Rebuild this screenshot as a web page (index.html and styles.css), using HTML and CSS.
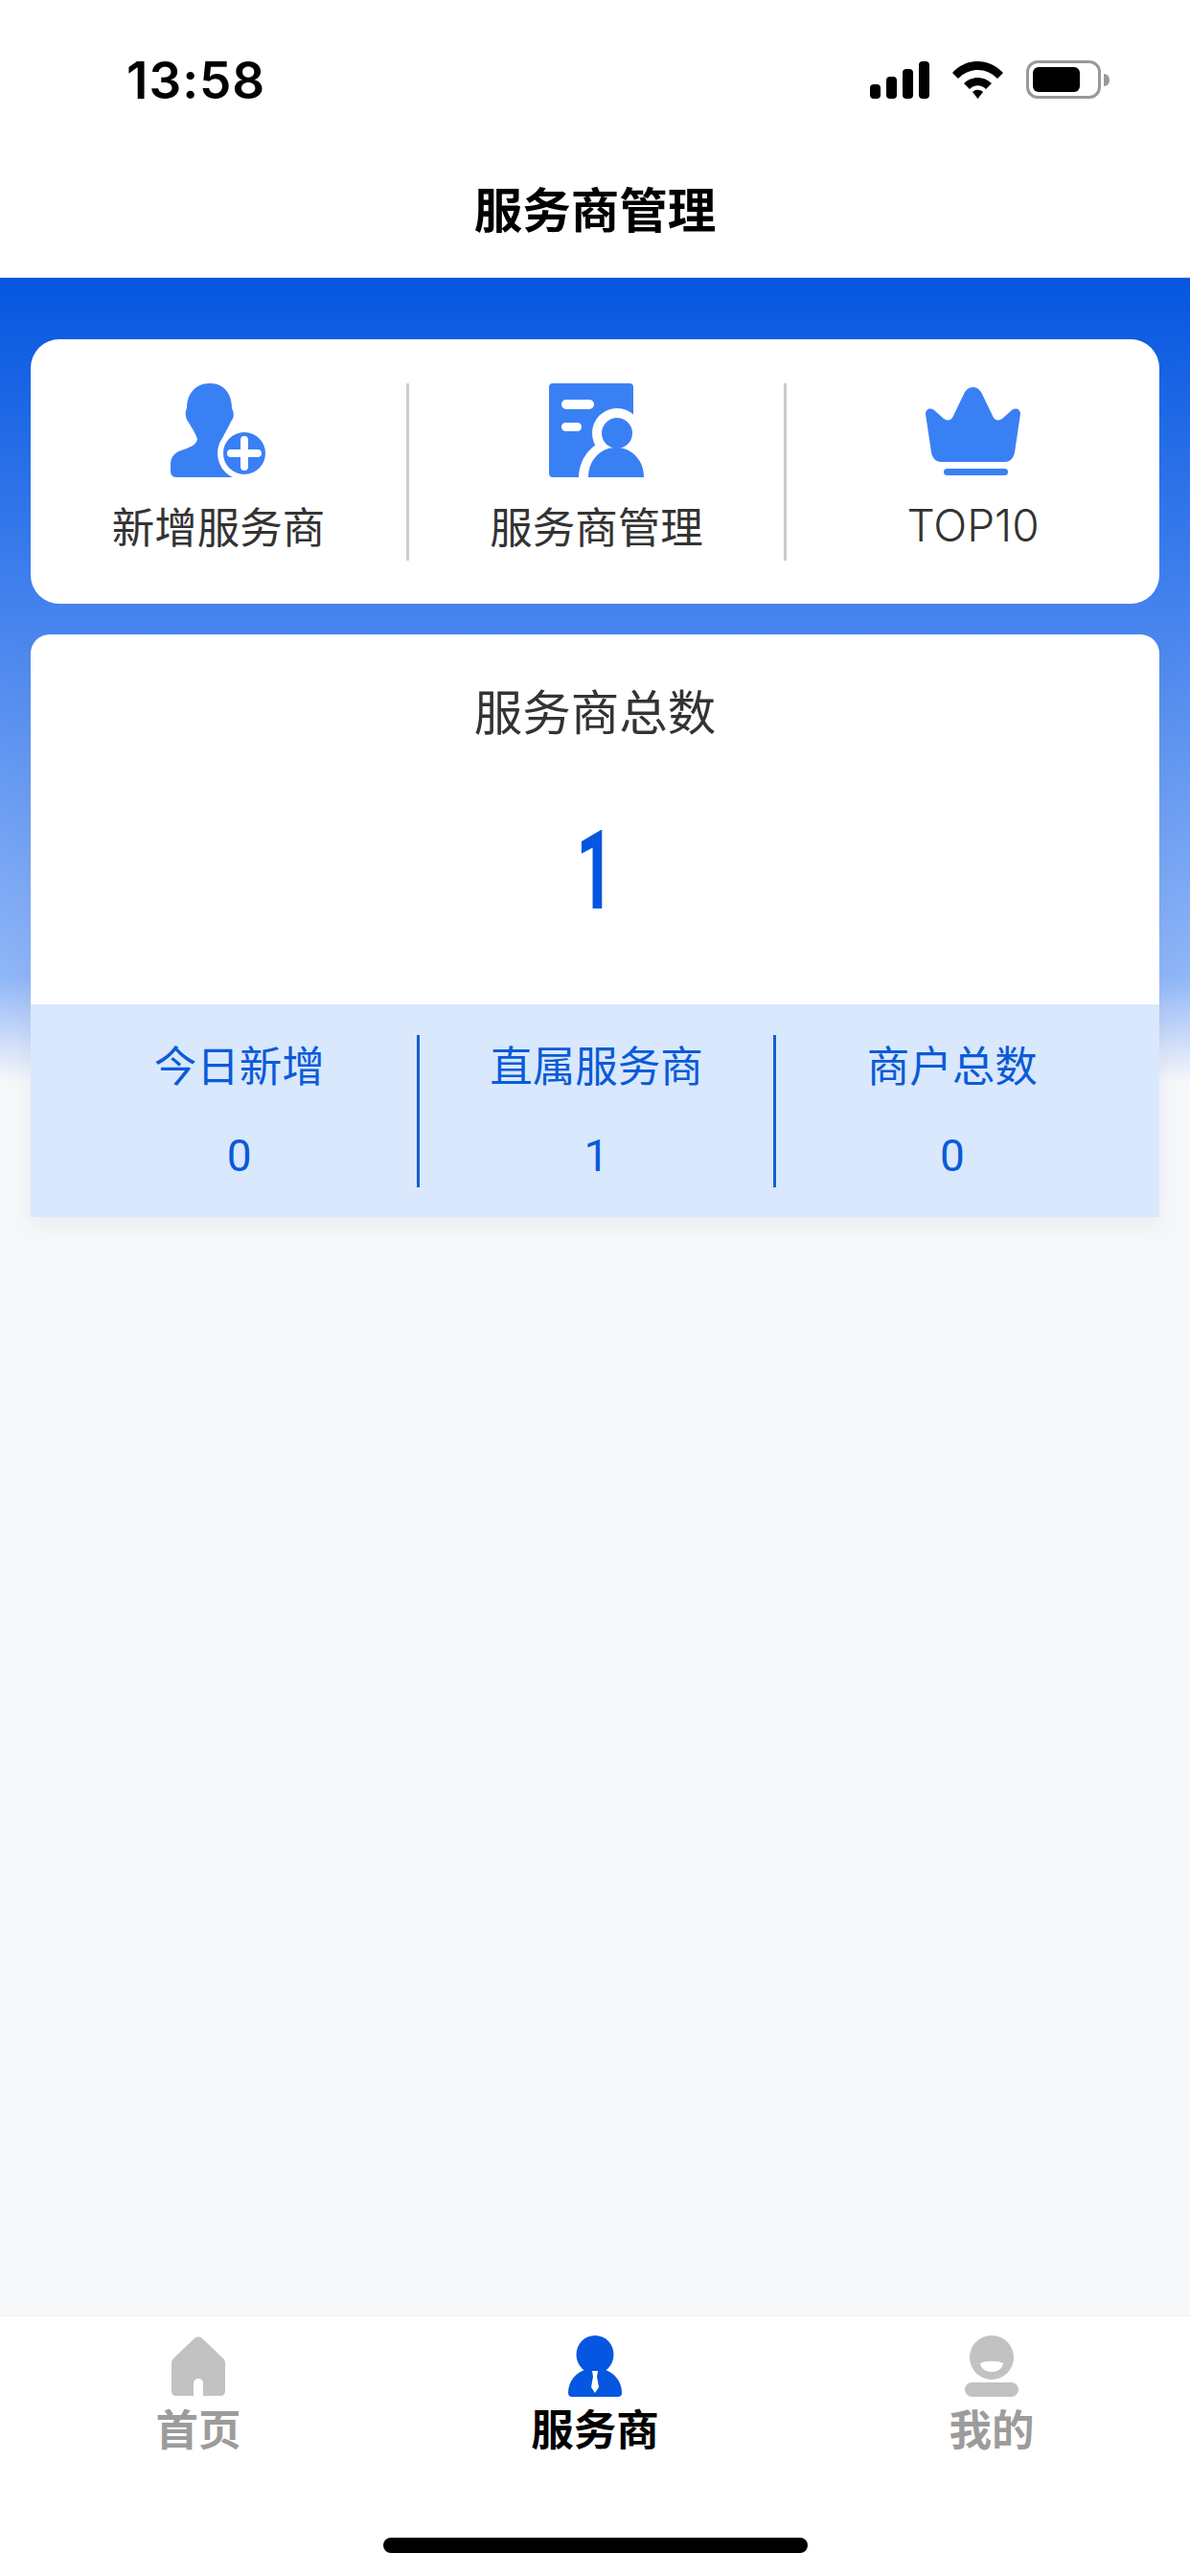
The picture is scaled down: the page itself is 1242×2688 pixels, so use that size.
FILE: index.html
```html
<html>
  <head>
    <meta charset="utf-8" />
    <title>服务商管理</title>
    <link rel="stylesheet" href="styles.css">
  </head>
  <body>
    <div class="page">
      <div class="top">
        <div class="status">
          <span class="time">13:58</span>
          <div class="status_icons">
            <svg class="signal" width="62" height="39" viewBox="0 0 62 39">
              <rect x="0" y="24" width="11" height="15" rx="4" />
              <rect x="17" y="16" width="11" height="23" rx="4" />
              <rect x="34" y="8" width="11" height="31" rx="4" />
              <rect x="51" y="0" width="11" height="39" rx="4" />
            </svg>
            <svg class="wifi" width="53" height="39" viewBox="0 0 53 39">
              <path d="M0 12 C15 -4 38 -4 53 12 L47 18 C35 6 18 6 6 18 Z" />
              <path d="M12 23 C20 15 33 15 41 23 L35 29 C30 24 23 24 18 29 Z" />
              <path d="M21 32 C24 29 29 29 32 32 L26.5 39 Z" />
            </svg>
            <div class="battery">
              <div class="battery_body"><div class="battery_fill"></div></div>
              <div class="battery_nub"></div>
            </div>
          </div>
        </div>
        <div class="title">服务商管理</div>
      </div>

      <div class="main">
        <div class="menu">
          <div class="menu_item">
            <svg width="100" height="99" viewBox="0 0 100 99">
              <path class="blue" d="M41 0 C56 0 64 11 64 26 C66 30 67 35 63 40 C60 47 56 52 54 58 C56 64 62 66 70 69 L80 98 L6 98 C2 98 0 95 0 92 L0 84 C0 76 6 71 14 69 C22 66 27 64 28 58 C26 52 22 46 19 41 C15 36 15 30 17 26 C17 11 26 0 41 0 Z" />
              <circle class="white" cx="77" cy="73" r="28" />
              <circle class="blue" cx="77" cy="73" r="22" />
              <path class="plus" d="M63 73 H91 M77 59 V87" />
            </svg>
            <span>新增服务商</span>
          </div>
          <div class="menu_item">
            <svg width="100" height="99" viewBox="0 0 100 99">
              <rect class="blue" x="0" y="0" width="88" height="98" rx="4" />
              <rect class="white" x="13" y="17" width="34" height="10" rx="5" />
              <rect class="white" x="13" y="41" width="21" height="9" rx="4.5" />
              <circle class="white" cx="71" cy="52" r="26" />
              <path class="white" d="M31 98 C31 75 50 57 71 57 C86 57 100 64 100 70 L100 98 Z" />
              <circle class="blue" cx="71" cy="52" r="16" />
              <path class="blue" d="M41 98 C41 80 54 67 70 67 C86 67 99 80 99 98 Z" />
            </svg>
            <span>服务商管理</span>
          </div>
          <div class="menu_item">
            <svg class="crown" width="99" height="92" viewBox="0 0 99 92">
              <path class="blue" d="M49.5 0 C54 0 57 3 59 7 L70 30 C72 35 77 36 81 32 L90 24 C94 21 99 23 99 28 L93 68 C92 74 88 78 83 78 L16 78 C11 78 7 74 6 68 L0 28 C0 23 5 21 9 24 L18 32 C22 36 27 35 29 30 L40 7 C42 3 45 0 49.5 0 Z" />
              <rect class="blue" x="19" y="85" width="67" height="7" rx="3.5" />
            </svg>
            <span class="latin">TOP10</span>
          </div>
        </div>

        <div class="total">
          <div class="total_head">
            <div class="total_label">服务商总数</div>
            <div class="total_num">1</div>
          </div>
          <div class="sub">
            <div class="sub_item">
              <div class="sub_label">今日新增</div>
              <div class="sub_num">0</div>
            </div>
            <div class="sub_item">
              <div class="sub_label">直属服务商</div>
              <div class="sub_num">1</div>
            </div>
            <div class="sub_item">
              <div class="sub_label">商户总数</div>
              <div class="sub_num">0</div>
            </div>
          </div>
        </div>
      </div>

      <div class="tabbar">
        <div class="tabs">
          <div class="tab">
            <svg width="56" height="64" viewBox="0 0 56 64">
              <path class="grey" d="M24 3 C26 1 30 1 32 3 L54 24 C55.500 25.500 56 27 56 29 L56 58 C56 61 54 63 51 63 L38 63 L33 63 L33 50 C33 47 31 45 28 45 C25 45 23 47 23 50 L23 63 L5 63 C2 63 0 61 0 58 L0 29 C0 27 0.500 25.500 2 24 Z" />
            </svg>
            <span>首页</span>
          </div>
          <div class="tab active">
            <svg width="56" height="64" viewBox="0 0 56 64">
              <ellipse class="dark" cx="28" cy="20" rx="19.500" ry="20" />
              <path class="dark" d="M0 60 C0 48 8 38 20 35 L36 35 C48 38 56 48 56 60 C56 63 54 64 52 64 L4 64 C2 64 0 63 0 60 Z" />
              <path class="white" d="M25 37 L31 37 L30 43 L32 54 L28 60 L24 54 L26 43 Z" />
            </svg>
            <span>服务商</span>
          </div>
          <div class="tab">
            <svg width="56" height="64" viewBox="0 0 56 64">
              <ellipse class="grey" cx="28" cy="23" rx="23" ry="23" />
              <path class="white" d="M16 29 C22 26 34 26 40 29 C39 35 34 38 28 38 C22 38 17 35 16 29 Z" />
              <rect class="grey" x="0" y="49" width="56" height="15" rx="7.500" />
            </svg>
            <span>我的</span>
          </div>
        </div>
        <div class="home_bar"></div>
      </div>
    </div>
  </body>
</html>
```

FILE: styles.css
```css
* {
  box-sizing: border-box;
}

body {
  margin: 0;
  font-family: "Noto Sans CJK SC", "Noto Sans", sans-serif;
}

.page {
  width: 1242px;
  height: 2688px;
  display: flex;
  flex-direction: column;
  background-color: #f7f8fa;
}

/* status bar + title */
.top {
  height: 290px;
  background-color: #fff;
  border-bottom: 1px solid #d5dbe3;
}
.status {
  height: 180px;
  padding: 63px 84px 0 132px;
  display: flex;
  justify-content: space-between;
  align-items: flex-start;
}
.time {
  font-family: "Inter", sans-serif;
  font-size: 53px;
  font-weight: 600;
  line-height: 42px;
  letter-spacing: 1px;
  color: #000;
}
.status_icons {
  display: flex;
  align-items: center;
  gap: 24px;
}
.signal,
.wifi {
  fill: #000;
}
.battery {
  display: flex;
  align-items: center;
  gap: 3px;
}
.battery_body {
  width: 78px;
  height: 40px;
  padding: 4px;
  border: 3px solid #999;
  border-radius: 12px;
}
.battery_fill {
  width: 49px;
  height: 100%;
  background-color: #000;
  border-radius: 6px;
}
.battery_nub {
  width: 6px;
  height: 13px;
  background-color: #999;
  border-radius: 0 6px 6px 0;
}
.title {
  text-align: center;
  font-size: 50.5px;
  font-weight: 700;
  line-height: 72px;
  color: #000;
}

/* blue area */
.main {
  flex: 1;
  padding: 64px 32px 0;
  background: linear-gradient(
    #0556e0 0,
    #4583ee 350px,
    #8fb6f7 730px,
    #b5cdf8 770px,
    #f7f8fa 840px
  );
}
.menu {
  height: 276px;
  padding: 46px 0 45px;
  display: grid;
  grid-template-columns: 392px 394px 392px;
  background-color: #fff;
  border-radius: 30px;
}
.menu_item {
  display: flex;
  flex-direction: column;
  align-items: center;
  font-size: 44.5px;
  line-height: 60px;
  color: #333;
  border-left: 3px solid #ccc;
}
.menu_item:first-child {
  border-left: none;
}
.menu_item svg {
  display: block;
  margin-bottom: 19px;
}
.menu_item .crown {
  margin-top: 4px;
  margin-bottom: 24px;
}
.latin {
  font-family: "Inter", sans-serif;
  font-size: 46px;
  font-weight: 300;
  line-height: 56px;
}
.blue {
  fill: #3a80f5;
}
.white {
  fill: #fff;
}
.plus {
  fill: none;
  stroke: #fff;
  stroke-width: 8;
  stroke-linecap: round;
}

.total {
  margin-top: 32px;
  background-color: #fff;
  border-radius: 20px 20px 0 0;
  box-shadow: 0 8px 24px rgba(120, 120, 140, 0.1);
}
.total_head {
  height: 386px;
  padding-top: 42px;
  text-align: center;
}
.total_label {
  font-size: 50.5px;
  line-height: 72px;
  color: #333;
}
.total_num {
  margin-top: 65px;
  font-family: "Roboto", sans-serif;
  font-size: 115px;
  font-weight: 700;
  line-height: 136px;
  color: #0556e0;
  transform: scaleX(0.6);
}
.sub {
  height: 222px;
  padding: 32px 32px 0;
  display: grid;
  grid-template-columns: repeat(3, 1fr);
  background-color: #d9e8fd;
}
.sub_item {
  height: 159px;
  text-align: center;
  color: #0a5bd8;
  border-left: 3px solid #1560cf;
}
.sub_item:first-child {
  border-left: none;
}
.sub_label {
  font-size: 44.5px;
  line-height: 60px;
}
.sub_num {
  margin-top: 40px;
  font-family: "Roboto", sans-serif;
  font-size: 46px;
  font-weight: 400;
  line-height: 52px;
}

/* tab bar */
.tabbar {
  height: 272px;
  background-color: #fff;
  border-top: 1px solid #eceef0;
}
.tabs {
  height: 231px;
  padding-top: 20px;
  display: grid;
  grid-template-columns: repeat(3, 1fr);
}
.tab {
  display: flex;
  flex-direction: column;
  align-items: center;
  font-size: 44.5px;
  font-weight: 700;
  line-height: 60px;
  color: #9c9c9c;
}
.tab svg {
  display: block;
  margin-bottom: 2px;
}
.tab.active {
  color: #000;
}
.grey {
  fill: #c2c2c2;
}
.dark {
  fill: #0556e0;
}
.home_bar {
  width: 443px;
  height: 16px;
  margin: 0 auto;
  background-color: #000;
  border-radius: 8px;
}
```
